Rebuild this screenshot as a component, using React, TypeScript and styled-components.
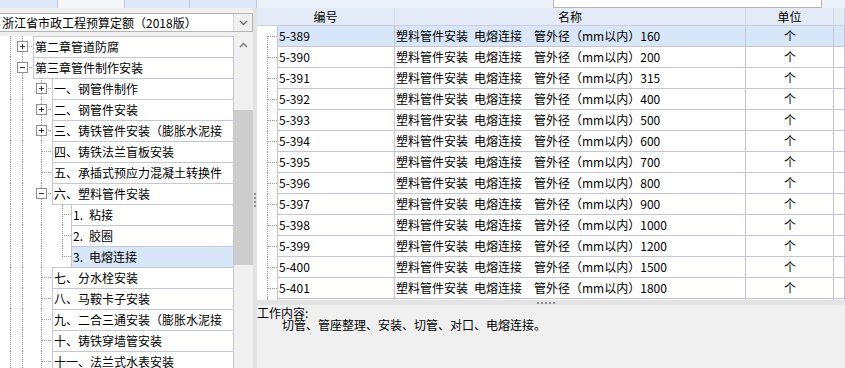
import styled, { createGlobalStyle } from 'styled-components';

const GlobalStyle = createGlobalStyle`
  html, body {
    margin: 0;
    padding: 0;
    background: #f0f0f0;
  }
  body {
    font-family: "Noto Sans CJK SC", "Noto Sans", sans-serif;
    font-size: 12px;
    color: #000;
  }
`;

const GRID_LINE = '#c6c3da';
const DOT = '#9a9a9a';
// en space: the half-width gap of the original bitmap font
const SP = '\u2002';

interface TreeItem {
  label: string;
  level: number;
  exp?: 'plus' | 'minus';
  last?: boolean;
  selected?: boolean;
}

const treeItems: TreeItem[] = [
  { label: '第二章管道防腐', level: 0, exp: 'plus' },
  { label: '第三章管件制作安装', level: 0, exp: 'minus' },
  { label: '一、钢管件制作', level: 1, exp: 'plus' },
  { label: '二、钢管件安装', level: 1, exp: 'plus' },
  { label: '三、铸铁管件安装（膨胀水泥接', level: 1, exp: 'plus' },
  { label: '四、铸铁法兰盲板安装', level: 1 },
  { label: '五、承插式预应力混凝土转换件', level: 1 },
  { label: '六、塑料管件安装', level: 1, exp: 'minus' },
  { label: `1.${SP}粘接`, level: 2 },
  { label: `2.${SP}胶圈`, level: 2 },
  { label: `3.${SP}电熔连接`, level: 2, last: true, selected: true },
  { label: '七、分水栓安装', level: 1 },
  { label: '八、马鞍卡子安装', level: 1 },
  { label: '九、二合三通安装（膨胀水泥接', level: 1 },
  { label: '十、铸铁穿墙管安装', level: 1 },
  { label: '十一、法兰式水表安装', level: 1 },
];

const sizes = [160, 200, 315, 400, 500, 600, 700, 800, 900, 1000, 1200, 1500, 1800];
const quotaRows = sizes.map((s, i) => ({
  code: `5-${389 + i}`,
  name: `塑料管件安装${SP}电熔连接${SP}${SP}管外径（mm以内）${s}`,
  unit: '个',
}));

const Frame = styled.div`
  width: 845px;
  height: 368px;
  overflow: hidden;
  display: flex;
  flex-direction: column;
  background: #f0f0f0;
`;

const TabStrip = styled.div`
  display: flex;
  height: 8px;
  flex: none;
  overflow: hidden;
`;

const Tab = styled.div<{ $w: number; $active?: boolean }>`
  width: ${p => p.$w}px;
  flex: none;
  box-sizing: border-box;
  background: ${p => (p.$active ? '#f5f7fa' : '#dfe8f6')};
  border-right: 1px solid #b8c9e4;
`;

const StripRest = styled.div`
  flex: 1;
  display: flex;
  background: #edf2fa;
  padding-left: 296px;
`;

const SearchBox = styled.div`
  width: 269px;
  box-sizing: border-box;
  background: #fff;
  border: 1px solid #b5b5b5;
  border-top: none;
`;

const Body = styled.div`
  flex: 1;
  min-height: 0;
  display: flex;
`;

const LeftPanel = styled.div`
  width: 253px;
  flex: none;
  display: flex;
  flex-direction: column;
  padding-top: 5px;
  box-sizing: border-box;
`;

const Combo = styled.div`
  height: 19px;
  flex: none;
  display: flex;
  box-sizing: border-box;
  border: 1px solid #b4b4b4;
  border-left: none;
  background: #fff;
`;

const ComboText = styled.div`
  flex: 1;
  padding-left: 2px;
  line-height: 17px;
  white-space: nowrap;
  overflow: hidden;
`;

const ComboButton = styled.div`
  width: 18px;
  flex: none;
  display: flex;
  align-items: center;
  justify-content: center;
  background: #f0f0f0;
  border-left: 1px solid #d6d6d6;
`;

const TreeArea = styled.div`
  flex: 1;
  min-height: 0;
  margin-top: 4px;
  display: flex;
`;

const TreeList = styled.div`
  width: 234px;
  flex: none;
  background: #fff;
  overflow: hidden;
`;

const TreeRow = styled.div`
  height: 21px;
  display: flex;
`;

const TreeLabel = styled.div<{ $selected?: boolean }>`
  flex: 1;
  min-width: 0;
  height: 22px;
  box-sizing: border-box;
  border: 1px solid #c8c4dc;
  background: ${p => (p.$selected ? '#d7e7f7' : '#fff')};
  padding-left: 1px;
  line-height: 19px;
  white-space: pre;
  overflow: hidden;
`;

const Scrollbar = styled.div`
  width: 19px;
  flex: none;
  display: flex;
  flex-direction: column;
  background: #f0f0f0;
`;

const ScrollArrow = styled.div`
  height: 17px;
  display: flex;
  align-items: center;
  justify-content: center;
`;

const ScrollThumb = styled.div`
  margin-top: 57px;
  height: 155px;
  background: #cdcdcd;
`;

const VSplitter = styled.div`
  width: 4px;
  flex: none;
  background: #e3e3e3;
  display: flex;
  flex-direction: column;
  align-items: center;
  justify-content: center;
  gap: 2px;
  padding-top: 24px;
  box-sizing: border-box;
`;

const Dot = styled.span`
  width: 2px;
  height: 2px;
  background: #8a8a8a;
`;

const RightPanel = styled.div`
  flex: 1;
  min-width: 0;
  display: flex;
  flex-direction: column;
`;

const Grid = styled.div`
  height: 292px;
  flex: none;
  overflow: hidden;
  background: #fff;
`;

const HeaderRow = styled.div`
  display: flex;
  height: 18px;
  box-sizing: border-box;
  background: #e4ebf7;
  border-bottom: 1px solid #c9cee4;
`;

const HeaderCell = styled.div<{ $w?: number }>`
  ${p => (p.$w ? `width: ${p.$w}px; flex: none;` : 'flex: 1;')}
  box-sizing: border-box;
  border-right: 1px solid #d2dbee;
  text-align: center;
  line-height: 17px;
`;

const DataRow = styled.div`
  display: flex;
  height: 21px;
`;

const Gutter = styled.div`
  width: 20px;
  flex: none;
`;

const Cell = styled.div<{ $w?: number; $first?: boolean; $center?: boolean; $selected?: boolean }>`
  ${p => (p.$w ? `width: ${p.$w}px; flex: none;` : 'flex: 1;')}
  box-sizing: border-box;
  border-right: 1px solid ${GRID_LINE};
  border-bottom: 1px solid ${GRID_LINE};
  ${p => (p.$first ? `border-left: 1px solid ${GRID_LINE};` : '')}
  background: ${p => (p.$selected ? '#d7e7f7' : '#fff')};
  padding-left: 1px;
  text-align: ${p => (p.$center ? 'center' : 'left')};
  line-height: 20px;
  white-space: pre;
  overflow: hidden;
`;

const HSplitter = styled.div`
  height: 5px;
  flex: none;
  background: #e3e3e3;
  display: flex;
  justify-content: center;
  align-items: center;
  gap: 2px;
  padding-right: 10px;
`;

const InfoPanel = styled.div`
  flex: 1;
  background: #f0f0f0;
  padding-top: 2px;
`;

const InfoTitle = styled.div`
  line-height: 12px;
  white-space: nowrap;
`;

const InfoText = styled.div`
  line-height: 12px;
  padding-left: 25px;
  white-space: nowrap;
`;

function TreeGuides({ item }: { item: TreeItem }) {
  const labelX = 33 + 19 * item.level;
  const ownX = 22 + 19 * item.level + (item.level === 2 ? 1 : 0);
  const verticals: { x: number; y2: number }[] = [
    { x: 10, y2: 21 },
    { x: 22, y2: 21 },
  ];
  if (item.level >= 1) verticals.push({ x: 41, y2: 21 });
  if (item.level === 2) verticals.push({ x: 62, y2: item.last ? 10 : 21 });
  const bx = ownX - 5;
  return (
    <svg width={labelX} height={21} style={{ flex: 'none', display: 'block' }} shapeRendering="crispEdges">
      {verticals.map(v => (
        <line key={v.x} x1={v.x + 0.5} y1={0} x2={v.x + 0.5} y2={v.y2} stroke={DOT} strokeDasharray="1 1" />
      ))}
      <line x1={ownX + 1} y1={10.5} x2={labelX} y2={10.5} stroke={DOT} strokeDasharray="1 1" />
      {item.exp && (
        <g>
          <rect x={bx + 0.5} y={5.5} width={10} height={10} fill="#fff" stroke="#8e8e8e" />
          <line x1={bx + 3} y1={10.5} x2={bx + 8} y2={10.5} stroke="#333" />
          {item.exp === 'plus' && <line x1={bx + 5.5} y1={8} x2={bx + 5.5} y2={13} stroke="#333" />}
        </g>
      )}
    </svg>
  );
}

function GridGuide({ first }: { first: boolean }) {
  return (
    <svg width={20} height={21} style={{ display: 'block' }} shapeRendering="crispEdges">
      <line x1={10.5} y1={first ? 10 : 0} x2={10.5} y2={21} stroke={DOT} strokeDasharray="1 1" />
      <line x1={11} y1={10.5} x2={20} y2={10.5} stroke={DOT} strokeDasharray="1 1" />
    </svg>
  );
}

export default function App() {
  return (
    <Frame>
      <GlobalStyle />
      <TabStrip>
        <Tab $w={58} />
        <Tab $w={67} $active />
        <Tab $w={65} />
        <Tab $w={67} />
        <StripRest>
          <SearchBox />
        </StripRest>
      </TabStrip>

      <Body>
        <LeftPanel>
          <Combo>
            <ComboText>浙江省市政工程预算定额（2018版）</ComboText>
            <ComboButton>
              <svg width="9" height="6" viewBox="0 0 9 6">
                <path d="M1 1l3.5 3.5L8 1" fill="none" stroke="#6f6f6f" strokeWidth="1.4" />
              </svg>
            </ComboButton>
          </Combo>

          <TreeArea>
            <TreeList>
              {treeItems.map(item => (
                <TreeRow key={item.label}>
                  <TreeGuides item={item} />
                  <TreeLabel $selected={item.selected}>{item.label}</TreeLabel>
                </TreeRow>
              ))}
            </TreeList>
            <Scrollbar>
              <ScrollArrow>
                <svg width="9" height="6" viewBox="0 0 9 6">
                  <path d="M1 5l3.5-3.5L8 5" fill="none" stroke="#7a7a7a" strokeWidth="1.4" />
                </svg>
              </ScrollArrow>
              <ScrollThumb />
            </Scrollbar>
          </TreeArea>
        </LeftPanel>

        <VSplitter>
          <Dot />
          <Dot />
          <Dot />
          <Dot />
        </VSplitter>

        <RightPanel>
          <Grid>
            <HeaderRow>
              <HeaderCell $w={138}>编号</HeaderCell>
              <HeaderCell $w={351}>名称</HeaderCell>
              <HeaderCell $w={88}>单位</HeaderCell>
              <HeaderCell />
            </HeaderRow>
            {quotaRows.map((r, i) => (
              <DataRow key={r.code}>
                <Gutter>
                  <GridGuide first={i === 0} />
                </Gutter>
                <Cell $w={118} $first $selected={i === 0}>{r.code}</Cell>
                <Cell $w={351} $selected={i === 0}>{r.name}</Cell>
                <Cell $w={88} $center $selected={i === 0}>{r.unit}</Cell>
                <Cell $selected={i === 0} />
              </DataRow>
            ))}
            <DataRow>
              <Gutter>
                <GridGuide first={false} />
              </Gutter>
              <Cell $w={118} $first />
              <Cell $w={351} />
              <Cell $w={88} />
              <Cell />
            </DataRow>
          </Grid>
          <HSplitter>
            <Dot />
            <Dot />
            <Dot />
            <Dot />
            <Dot />
          </HSplitter>
          <InfoPanel>
            <InfoTitle>工作内容:</InfoTitle>
            <InfoText>切管、管座整理、安装、切管、对口、电熔连接。</InfoText>
          </InfoPanel>
        </RightPanel>
      </Body>
    </Frame>
  );
}
